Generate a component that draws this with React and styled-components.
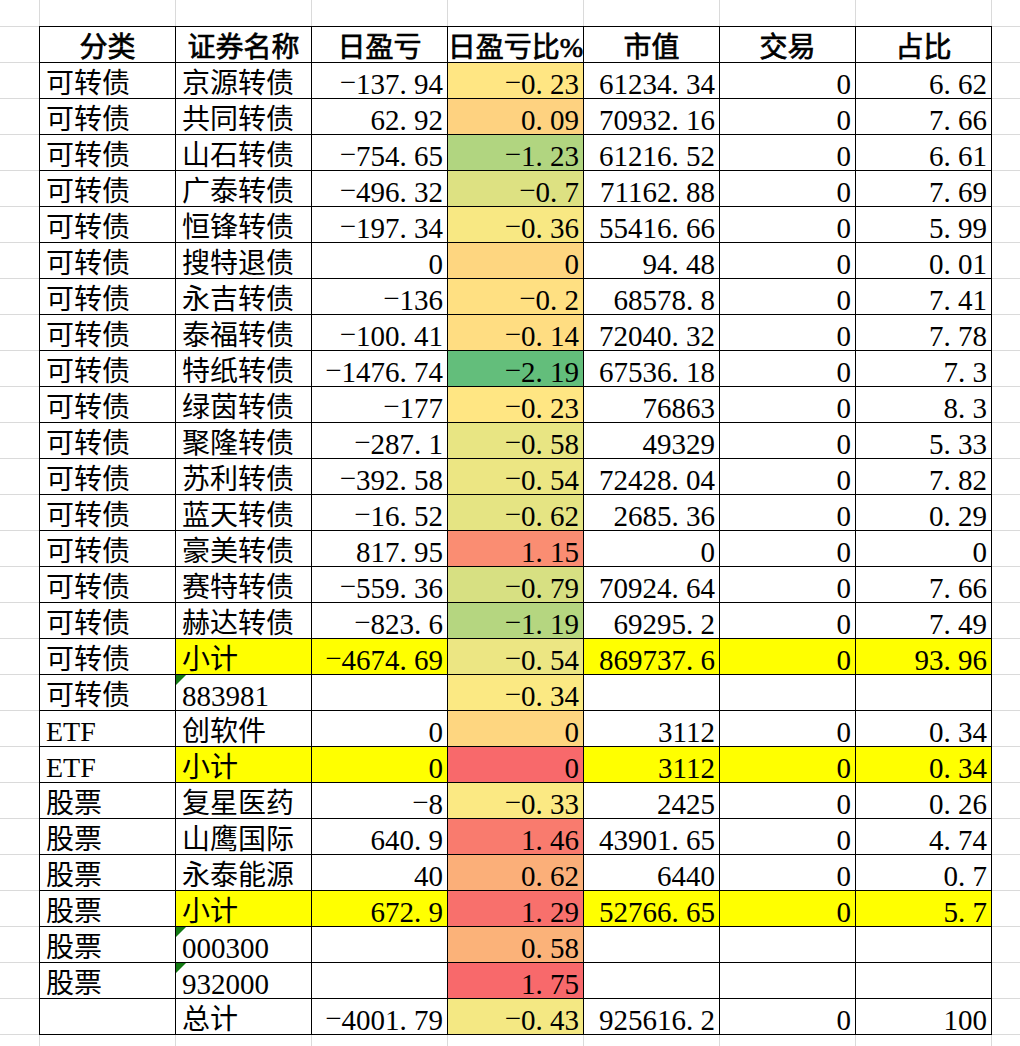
import React from 'react';
import styled, { createGlobalStyle } from 'styled-components';

const Global = createGlobalStyle`
  html, body { margin: 0; padding: 0; background: #fff; }
  body { font-family: "Liberation Serif", "Noto Sans CJK SC", serif; color: #000; }
`;

const Sheet = styled.div`
  width: 1020px;
  height: 1046px;
  overflow: hidden;
  display: grid;
  grid-template-columns: 39px 953px 1fr;
  grid-template-rows: 26px auto 1fr;
  background-color: #fff;
  background-image:
    linear-gradient(to right, #dadada 1px, transparent 1px),
    linear-gradient(to bottom, #dadada 1px, transparent 1px);
  background-size: 136px 100%, 100% 36px;
  background-position: 39px 0, 0 26px;
`;

const Table = styled.div`
  grid-column: 2;
  grid-row: 2;
  display: grid;
  grid-template-columns: repeat(7, 135px);
  grid-auto-rows: 35px;
  gap: 1px;
  padding: 1px;
  background: #000;
`;

const justify = { left: 'flex-start', right: 'flex-end', center: 'center' };

const Cell = styled.div`
  position: relative;
  display: flex;
  align-items: flex-end;
  justify-content: ${(p) => justify[p.$align || 'left']};
  padding: 0 4px 0 6px;
  background: ${(p) => p.$bg || '#fff'};
  font-size: 28px;
  line-height: 28px;
  font-weight: 400;
  white-space: nowrap;
`;

const HeadCell = styled(Cell)`
  padding: 0;
  -webkit-text-stroke: 0.7px #000;
`;

const NumText = styled.span`
  font-size: 29px;
`;

const Dot = styled.span`
  display: inline-block;
  width: 0.5em;
  text-align: left;
`;

const Minus = styled.span`
  display: inline-block;
  vertical-align: 0.08em;
`;

const Flag = styled.span`
  position: absolute;
  left: 0;
  top: 0;
  width: 0;
  height: 0;
  border-top: 10px solid #127a12;
  border-right: 10px solid transparent;
`;

const YELLOW = '#FFFF00';

const Num = ({ value }) => (
  <NumText>
    {[...value].map((ch, i) =>
      ch === '.' ? (
        <Dot key={i}>.</Dot>
      ) : ch === '-' ? (
        <Minus key={i}>−</Minus>
      ) : (
        <React.Fragment key={i}>{ch}</React.Fragment>
      )
    )}
  </NumText>
);

const headers = ['分类', '证券名称', '日盈亏', '日盈亏比%', '市值', '交易', '占比'];

// [category, name, pnl, pct, pctColour, marketValue, trade, share, kind]
const rows = [
  ['可转债', '京源转债', '-137.94', '-0.23', '#FFE683', '61234.34', '0', '6.62'],
  ['可转债', '共同转债', '62.92', '0.09', '#FED280', '70932.16', '0', '7.66'],
  ['可转债', '山石转债', '-754.65', '-1.23', '#B1D580', '61216.52', '0', '6.61'],
  ['可转债', '广泰转债', '-496.32', '-0.7', '#DDE182', '71162.88', '0', '7.69'],
  ['可转债', '恒锋转债', '-197.34', '-0.36', '#F8E883', '55416.66', '0', '5.99'],
  ['可转债', '搜特退债', '0', '0', '#FED680', '94.48', '0', '0.01'],
  ['可转债', '永吉转债', '-136', '-0.2', '#FFE082', '68578.8', '0', '7.41'],
  ['可转债', '泰福转债', '-100.41', '-0.14', '#FFDD82', '72040.32', '0', '7.78'],
  ['可转债', '特纸转债', '-1476.74', '-2.19', '#63BE7B', '67536.18', '0', '7.3'],
  ['可转债', '绿茵转债', '-177', '-0.23', '#FFE683', '76863', '0', '8.3'],
  ['可转债', '聚隆转债', '-287.1', '-0.58', '#E8E583', '49329', '0', '5.33'],
  ['可转债', '苏利转债', '-392.58', '-0.54', '#ECE683', '72428.04', '0', '7.82'],
  ['可转债', '蓝天转债', '-16.52', '-0.62', '#E5E483', '2685.36', '0', '0.29'],
  ['可转债', '豪美转债', '817.95', '1.15', '#FA8D72', '0', '0', '0'],
  ['可转债', '赛特转债', '-559.36', '-0.79', '#D7E082', '70924.64', '0', '7.66'],
  ['可转债', '赫达转债', '-823.6', '-1.19', '#B5D680', '69295.2', '0', '7.49'],
  ['可转债', '小计', '-4674.69', '-0.54', '#ECE683', '869737.6', '0', '93.96', 'sub'],
  ['可转债', '883981', '', '-0.34', '#FBE983', '', '', '', 'code'],
  ['ETF', '创软件', '0', '0', '#FED680', '3112', '0', '0.34'],
  ['ETF', '小计', '0', '0', '#F8696B', '3112', '0', '0.34', 'sub'],
  ['股票', '复星医药', '-8', '-0.33', '#FBE983', '2425', '0', '0.26'],
  ['股票', '山鹰国际', '640.9', '1.46', '#F97B6E', '43901.65', '0', '4.74'],
  ['股票', '永泰能源', '40', '0.62', '#FBAF79', '6440', '0', '0.7'],
  ['股票', '小计', '672.9', '1.29', '#F8706C', '52766.65', '0', '5.7', 'sub'],
  ['股票', '000300', '', '0.58', '#FBB279', '', '', '', 'code'],
  ['股票', '932000', '', '1.75', '#F8696B', '', '', '', 'code'],
  ['', '总计', '-4001.79', '-0.43', '#F4E883', '925616.2', '0', '100'],
];

const NumCell = ({ value, bg }) => (
  <Cell $align="right" $bg={bg}>
    {value !== '' && <Num value={value} />}
  </Cell>
);

const Row = ({ data }) => {
  const [cat, name, pnl, pct, pctBg, mv, trade, share, kind] = data;
  const hi = kind === 'sub' ? YELLOW : undefined;
  return (
    <>
      <Cell>{cat}</Cell>
      <Cell $bg={hi}>
        {kind === 'code' && <Flag />}
        {kind === 'code' ? <NumText>{name}</NumText> : name}
      </Cell>
      <NumCell value={pnl} bg={hi} />
      <NumCell value={pct} bg={pctBg} />
      <NumCell value={mv} bg={hi} />
      <NumCell value={trade} bg={hi} />
      <NumCell value={share} bg={hi} />
    </>
  );
};

export default function App() {
  return (
    <>
      <Global />
      <Sheet>
        <Table>
          {headers.map((h) => (
            <HeadCell key={h} $align="center">
              {h}
            </HeadCell>
          ))}
          {rows.map((r, i) => (
            <Row key={i} data={r} />
          ))}
        </Table>
      </Sheet>
    </>
  );
}
